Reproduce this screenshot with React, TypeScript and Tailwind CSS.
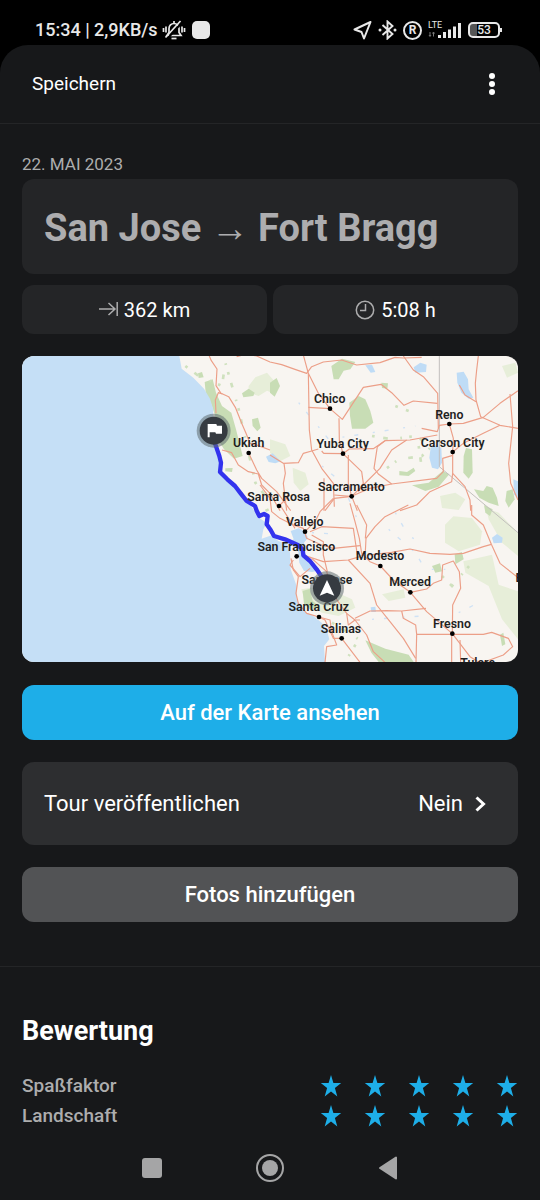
import type { ReactNode } from 'react'

// map coordinates: 3 units per css pixel at a width of 496px
const cities = [
  { name: 'Chico', x: 923, y: 142, dot: [924, 158] },
  { name: 'Reno', x: 1282, y: 188, dot: [1282, 204] },
  { name: 'Carson City', x: 1292, y: 272, dot: [1292, 288] },
  { name: 'Yuba City', x: 962, y: 276, dot: [963, 293] },
  { name: 'Ukiah', x: 680, y: 273, dot: [680, 291] },
  { name: 'Sacramento', x: 988, y: 405, dot: [989, 421] },
  { name: 'Santa Rosa', x: 770, y: 434, dot: [771, 450] },
  { name: 'Vallejo', x: 848, y: 510, dot: [849, 527] },
  { name: 'San Francisco', x: 823, y: 584, dot: [824, 601] },
  { name: 'Modesto', x: 1074, y: 613, dot: [1075, 630] },
  { name: 'Merced', x: 1164, y: 691, dot: [1165, 709] },
  { name: 'San Jose', x: 915, y: 685, dot: [915, 700] },
  { name: 'Santa Cruz', x: 890, y: 765, dot: [891, 783] },
  { name: 'Salinas', x: 957, y: 830, dot: [959, 847] },
  { name: 'Fresno', x: 1290, y: 815, dot: [1291, 833] },
  { name: 'Tulare', x: 1367, y: 933, dot: [1367, 950] },
  { name: 'Bishop', x: 1538, y: 678, dot: [1538, 695] },
]

const northRoads = [
  'M-189 2L-176 32L-159 57L-162 107L-147 130L-124 140L-104 172L-84 222L-72 250L-60 280L-40 285L0 300',
  'M-162 190L-164 150L-155 128L-143 132',
  'M-100 20L-70 12L-40 18L0 36L35 44L75 58L110 70L125 50L160 36L215 30L260 45L330 38L375 22L400 24L455 22',
  'M100 15L115 70L118 240L125 300L155 355L190 400L193 470',
  'M115 70L145 130L180 176L217 208L280 112L333 103L365 128L402 166L430 153L502 160',
  'M115 172L180 176M207 205L208 270L219 311',
  'M400 18L430 60L460 80L503 130L505 235',
  'M455 235L502 245L508 226L538 222L580 220L640 202L690 160L744 122',
  'M625 18L620 60L616 100L618 150L632 200L690 226L744 235',
  'M568 105L585 135L618 155M720 132L728 230L716 340L722 400L744 450',
  'M538 222L550 265L548 306L548 370L585 410L600 450L602 482',
  'M160 310L219 311L238 297L310 296L345 272L420 270L502 255',
  'M0 315L40 340L85 338L100 310L125 303L145 297M42 340L46 370L40 400L50 482',
  'M235 315L235 400L245 439L262 482M219 311L275 365L280 400L265 425',
  'M345 272L322 290L312 355L325 372L365 402L500 385L520 365L518 325L548 316',
  'M410 270L365 300L330 355L280 405L245 439L193 445L165 482',
  'M245 439L300 415L365 402M390 482L440 465L480 425L545 395L548 370',
  'M548 306L580 280L640 250L690 226M161 310L155 303M162 385L162 482M193 435L240 439',
  'M-144 300L-115 308L-95 345L-65 365L-35 372L-25 405L0 430L30 482M-64 309L-40 360L-25 385L20 425L62 482',
]

const southRoads = [
  'M0 -20L5 20L30 40L70 60L100 70L110 100L150 118L190 130L270 122',
  'M240 -5L255 50L268 100L275 145L300 170L331 183L370 225L421 262L470 320L547 386L600 455L640 480',
  'M260 0L290 60L286 100M286 140L288 100L315 65L345 35L415 0M105 80L135 50L150 20L190 -20',
  'M120 80L155 65L250 70L262 150M100 150L160 170L235 165L270 155L286 140',
  'M235 165L300 235L320 300L360 350L400 400L437 460',
  'M295 150L365 142L420 132L480 145L540 148L580 145L640 125L664 118',
  'M605 0L605 30L640 60L664 118L690 175L744 218',
  'M421 262L470 252L490 235L515 225L518 180L550 168L568 200L572 250L548 300L547 386',
  'M255 340L300 318L350 317L395 318L468 310M395 318L400 340L437 360L440 388L438 472M440 388L640 388L665 382L715 400L728 425L700 450L640 472',
  'M545 386L545 472M570 405L572 472',
  'M63 160L70 195L85 215L78 265L85 295L110 325L147 336L180 345L185 380L200 420L170 425L165 472',
  'M125 160L170 200L190 270L230 325L255 345L270 345M147 336L165 345L190 400L215 400L270 472',
  'M230 325L235 360L255 345M255 345L290 390L310 440L345 472M70 165L60 180L90 215L120 190',
  'M125 90L160 110L160 150L172 200M0 -20L-30 -60M60 -30L30 0L75 70',
]

const route =
  'M575 240L579 262L592 300L597 320L594 348L616 370L639 390L656 412L674 435L699 450L704 464L712 480L726 474L737 480L734 505L746 522L756 540L789 550L829 568L842 580L844 598L864 615L884 640L899 662L914 695'

function TourMap() {
  return (
    <svg viewBox="0 0 1488 918" className="block w-full rounded-xl" role="img" aria-label="San Jose → Fort Bragg">
      <rect width="1488" height="918" fill="#f8f5f1" />

      <g fill="#e7eed9">
        <path d="M680 90L700 64L735 50L770 90L760 115L735 104L710 120L680 110Z" />
        <path d="M1269 506L1294 481L1350 486L1380 526L1374 566L1310 586L1269 560Z" />
        <path d="M1324 616L1410 596L1430 686L1488 706V850L1440 790L1400 690L1330 650Z" />
        <path d="M1392 456L1430 470L1488 530V600L1440 560L1400 490Z" />
        <path d="M744 250L790 265L805 300L770 318L744 290Z" />
        <path d="M812 335L850 350L860 385L835 405L815 380Z" />
        <path d="M1254 420L1300 410L1330 430L1310 462L1260 456Z" />
        <path d="M838 700L900 690L990 730L1000 755L950 780L900 770L850 740Z" />
        <path d="M1440 30L1480 20L1488 50L1455 65Z" />
        <path d="M1080 715L1145 700L1150 725L1100 735Z" />
      </g>
      <g fill="#c8ddb5">
        <path d="M548 78L572 70L582 110L600 150L628 170L642 220L662 300L636 308L606 280L582 240L580 180L566 140L552 120Z" />
        <path d="M982 140L1010 120L1030 130L1045 165L1054 200L1030 218L990 218L984 180Z" />
        <path d="M928 30L960 8L1000 18L985 40L965 44L950 70L935 70Z" />
        <path d="M1332 276L1350 280L1352 350L1340 368L1324 350L1325 300Z" />
        <path d="M1170 388L1220 380L1262 345L1282 355L1250 392L1210 405Z" />
        <path d="M1132 345L1155 348L1175 335L1180 345L1160 360L1132 358Z" />
        <path d="M1356 400L1384 405L1394 390L1412 395L1425 425L1430 450L1400 440L1372 425Z" />
        <path d="M1454 405L1472 400L1478 430L1460 455L1450 435Z" />
        <path d="M744 80L764 66L774 90L758 122L744 110Z" />
        <path d="M842 705L864 698L872 735L890 750L866 762L846 745Z" />
        <path d="M1030 853L1090 878L1160 896L1175 918L1070 918L1048 890Z" />
        <path d="M660 112L680 98L698 110L694 120L664 124Z" />
        <path d="M690 190L708 185L716 215L706 226L692 210Z" />
        <path d="M610 337L632 336L630 348L610 346Z" />
        <path d="M1298 595L1320 588L1325 610L1300 625Z" />
        <path d="M528 52L540 48L545 64L530 66Z" />
        <path d="M1078 80L1098 82L1096 98L1080 96Z" />
        <path d="M1386 447L1412 460L1404 480L1390 470Z" />
        <path d="M1230 630L1254 622L1260 646L1240 650Z" />
        <path d="M1434 836L1444 830L1450 865L1440 870Z" />
      </g>
      {/* small woods and clearings */}
      <g fill="none" stroke="#cfe1be" strokeWidth="8" strokeDasharray="8 26 14 38 5 22">
        <path d="M490 30L530 60L600 90L610 20L650 160L700 380L730 420" />
        <path d="M1050 240L1110 250L1180 240L1230 270L1200 300L1130 310L1090 340" />
        <path d="M1120 150L1160 165M1190 270L1200 340M1260 660L1290 690L1350 620" />
        <path d="M930 800L1010 850L980 900M700 480L740 460" />
      </g>
      <g fill="none" stroke="#cfe2f5" strokeWidth="4" strokeDasharray="6 30 12 44">
        <path d="M1120 470L1160 540L1200 560M1100 520L1180 590L1210 640L1270 640" />
        <path d="M830 140L920 250L1050 230L1180 210M900 330L960 380L1010 500" />
        <path d="M1310 770L1370 740M1050 790L1200 780M870 530L960 535" />
      </g>

      {/* pacific ocean */}
      <path
        fill="#c5dff6"
        d="M0 0H472L479 38L514 65L546 98L564 128L574 160L572 205L577 270L592 300L590 345L634 390L684 445L708 482L734 502L724 520L719 548L749 538L769 555L796 565L804 590L806 640L824 690L824 730L844 765L874 780L899 800L914 820L922 850L906 870L909 918H0Z"
      />
      <g fill="#bfdcf6">
        <path d="M806 525L830 517L850 527L858 545L846 560L848 590L864 612L884 645L870 648L846 645L832 620L828 580L800 560L815 550Z" />
        <path d="M1304 50L1325 47L1338 70L1340 100L1354 125L1340 128L1318 110L1306 80Z" />
        <path d="M1226 275L1240 268L1258 275L1260 320L1248 340L1230 335L1222 305Z" />
        <path d="M1175 34L1195 20L1214 26L1212 48L1180 50Z" />
        <path d="M1030 28L1050 26L1060 48L1046 50Z" />
        <path d="M1410 545L1425 534L1442 545L1440 560L1415 562Z" />
        <path d="M1474 370L1488 376V430L1476 415Z" />
        <path d="M732 302L752 292L776 316L760 322L740 318Z" />
        <path d="M1046 754L1060 752L1062 768L1048 768Z" />
      </g>

      <path d="M1252 0V332L1400 456L1488 530" fill="none" stroke="#c2bfbd" strokeWidth="3" />

      <g fill="none" stroke="#ec9f88" strokeWidth="3.500" strokeLinejoin="round">
        <g transform="translate(744 -18)">
          {northRoads.map((d) => <path key={d} d={d} />)}
        </g>
        <g transform="translate(744 447)">
          {southRoads.map((d) => <path key={d} d={d} />)}
        </g>
      </g>

      <path d={route} fill="none" stroke="#3333ee" strokeWidth="13" strokeLinejoin="round" />

      <g fill="#1f1f1f" textAnchor="middle" className="font-['Roboto',sans-serif] text-[37px] font-semibold">
        {cities.map((c) => (
          <g key={c.name}>
            <circle cx={c.dot[0]} cy={c.dot[1]} r="7" fill="#000" />
            <text x={c.x} y={c.y}>{c.name}</text>
          </g>
        ))}
      </g>

      <circle cx="575" cy="224" r="51" fill="#5f6b70" opacity="0.55" />
      <circle cx="575" cy="224" r="42" fill="#363b41" />
      <path d="M557 204H583L585 209H600V233H582L580 229H563V244H557Z" fill="#fff" />

      <circle cx="915" cy="697" r="51" fill="#5f6b70" opacity="0.55" />
      <circle cx="915" cy="697" r="42" fill="#363b41" />
      <path d="M915 672L937 719L915 710L893 719Z" fill="#fff" />
    </svg>
  )
}

function StatusBar() {
  return (
    <div className="flex h-[45px] items-center pt-[15px] pr-[38px] pl-[35px] text-[#e8e8e8]">
      <span className="text-lg leading-7 font-medium">15:34 | 2,9KB/s</span>
      <svg className="ml-1 h-5 w-6" viewBox="0 0 24 20" fill="none" stroke="currentColor" strokeWidth="1.700" aria-hidden="true">
        <path d="M5 15.500h14l-2-3V8.500a5 5 0 0 0-10 0v4zM12 3.500V1" />
        <path d="M9.500 18.500h5" />
        <path d="M1.500 8v4M4 6.500v6M22.500 8v4M20 6.500v6" />
        <path d="M5.500 18.500L20 2.500" stroke="#000" strokeWidth="2" />
        <path d="M3.500 17.500L18.500 1" />
      </svg>
      <span className="ml-1.5 size-[18px] rounded-[5px] bg-[#e8e8e8]" />

      <div className="ml-auto flex items-center gap-1.5">
        <svg className="h-5 w-[19px]" viewBox="0 0 19 20" fill="none" stroke="currentColor" strokeWidth="2" strokeLinejoin="round" aria-hidden="true">
          <path d="M17.500 2L1.500 9.500l7 2.500 2.500 6.500z" />
        </svg>
        <svg className="h-5 w-[19px]" viewBox="0 0 19 20" fill="none" stroke="currentColor" strokeWidth="1.900" aria-hidden="true">
          <path d="M4.500 5l10 9-5 4.500V1.500l5 4.500-10 9" />
          <circle cx="2" cy="10" r="1.500" fill="currentColor" stroke="none" />
          <circle cx="17" cy="10" r="1.500" fill="currentColor" stroke="none" />
        </svg>
        <span className="flex size-[19px] items-center justify-center rounded-full border-2 border-current text-xs leading-none font-bold">
          R
        </span>
        <svg className="h-5 w-[34px]" viewBox="0 0 34 20" fill="currentColor" aria-hidden="true">
          <text x="0" y="8" className="font-['Roboto',sans-serif] text-[9px]">LTE</text>
          <path d="M2 12v4M1 15l1 1.500 1-1.500M5.500 16.500v-4M4.500 13.500l1-1.500 1 1.500" stroke="#777" fill="none" />
          <path d="M10 15h3v3h-3zM15 12h3v6h-3zM20 9.500h3V18h-3zM25 6.500h3V18h-3zM30 3h3v15h-3z" />
        </svg>
        <div className="flex items-center">
          <span className="flex h-4 w-8 items-center justify-center rounded-[5px] border-2 border-current bg-linear-to-r from-[#555] from-25% to-black to-25% text-xs leading-none font-medium">
            53
          </span>
          <span className="h-1 w-0.5 bg-current" />
        </div>
      </div>
    </div>
  )
}

function Stat({ icon, children }: { icon: ReactNode; children: ReactNode }) {
  return (
    <div className="flex h-[49px] flex-1 items-center justify-center gap-1.5 rounded-xl bg-[#242527] text-xl text-white">
      {icon}
      <span>{children}</span>
    </div>
  )
}

function Rating({ label }: { label: string }) {
  return (
    <div className="flex h-[30px] items-center justify-between">
      <span className="text-[19px] font-medium text-[#adadae]">{label}</span>
      <div className="flex gap-[22px]" role="group" aria-label={label}>
        {[1, 2, 3, 4, 5].map((n) => (
          <button key={n} type="button" aria-label={`${label} ${n}`} className="size-[22px]">
            <svg viewBox="0 0 22 22" className="size-[22px]" fill="#1eaee8">
              <path d="M11 0l2.400 8H21.200l-6.300 4.900 2.400 8.600L11 16.400l-6.300 5.100 2.400-8.600L.8 8h7.800z" />
            </svg>
          </button>
        ))}
      </div>
    </div>
  )
}

export default function App() {
  return (
    <div className="flex min-h-screen flex-col bg-black font-['Roboto',sans-serif]">
      <StatusBar />

      <div className="flex flex-1 flex-col rounded-t-[28px] bg-[#17181a]">
        <header className="flex h-[79px] items-center justify-between border-b border-[#242527] pr-9 pl-8">
          <button type="button" className="text-[19px] text-white">Speichern</button>
          <button type="button" aria-label="Menü" className="flex w-6 justify-center">
            <svg className="h-6 w-2" viewBox="0 0 8 24" fill="#fff">
              <circle cx="4" cy="4" r="3" />
              <circle cx="4" cy="12" r="3" />
              <circle cx="4" cy="20" r="3" />
            </svg>
          </button>
        </header>

        <main className="px-[22px] pt-7">
          <p className="mb-[3px] text-[17px] leading-6 text-[#adadae]">22. MAI 2023</p>
          <h1 className="flex h-[95px] items-center rounded-xl bg-[#242527] px-[22px] pt-1 text-[38px] font-bold whitespace-pre text-[#adadaf]">
            San Jose → Fort Bragg
          </h1>

          <div className="mt-[11px] flex gap-1.5">
            <Stat
              icon={
                <svg className="h-5 w-[19px]" viewBox="0 0 19 20" fill="none" stroke="#adadae" strokeWidth="1.500" aria-hidden="true">
                  <path d="M0 9h16M9.500 3l6.500 6-6.500 6M18.200 2v14" />
                </svg>
              }
            >
              362 km
            </Stat>
            <Stat
              icon={
                <svg className="size-5" viewBox="0 0 20 20" fill="none" stroke="#adadae" strokeWidth="1.500" aria-hidden="true">
                  <circle cx="10" cy="10" r="8.700" />
                  <path d="M10.500 4v6.500H5" />
                </svg>
              }
            >
              5:08 h
            </Stat>
          </div>

          <div className="mt-[22px]">
            <TourMap />
          </div>

          <button type="button" className="mt-[23px] h-[55px] w-full rounded-xl bg-[#1eaee8] text-[22px] font-medium text-white">
            Auf der Karte ansehen
          </button>

          <button type="button" className="mt-[22px] flex h-[83px] w-full items-center justify-between rounded-xl bg-[#2d2e30] pr-8 pl-[22px] text-[22px] text-white">
            <span>Tour veröffentlichen</span>
            <span className="flex items-center gap-3">
              Nein
              <svg className="h-4 w-[11px]" viewBox="0 0 11 16" fill="none" stroke="currentColor" strokeWidth="3" aria-hidden="true">
                <path d="M1.500 1.500L8.500 8l-7 6.500" />
              </svg>
            </span>
          </button>

          <button type="button" className="mt-[22px] h-[55px] w-full rounded-xl bg-[#525355] text-[22px] font-medium text-white">
            Fotos hinzufügen
          </button>
        </main>

        <section className="mt-11 border-t border-[#242527] px-[22px] pt-[44px]">
          <h2 className="text-[27px] leading-10 font-bold text-white">Bewertung</h2>
          <div className="mt-5">
            <Rating label="Spaßfaktor" />
            <Rating label="Landschaft" />
          </div>
        </section>

        <nav className="mt-auto flex h-[65px] items-center justify-center gap-[94px] text-[#a5a5a6]">
          <button type="button" aria-label="Übersicht" className="size-5 rounded-[3px] bg-current" />
          <button type="button" aria-label="Start" className="flex size-7 items-center justify-center rounded-full border-2 border-current">
            <span className="size-4 rounded-full bg-current" />
          </button>
          <button type="button" aria-label="Zurück" className="h-6 w-5">
            <svg viewBox="0 0 20 24" fill="currentColor" stroke="currentColor" strokeWidth="2" strokeLinejoin="round">
              <path d="M18 1.500v21L2 12z" />
            </svg>
          </button>
        </nav>
      </div>
    </div>
  )
}
